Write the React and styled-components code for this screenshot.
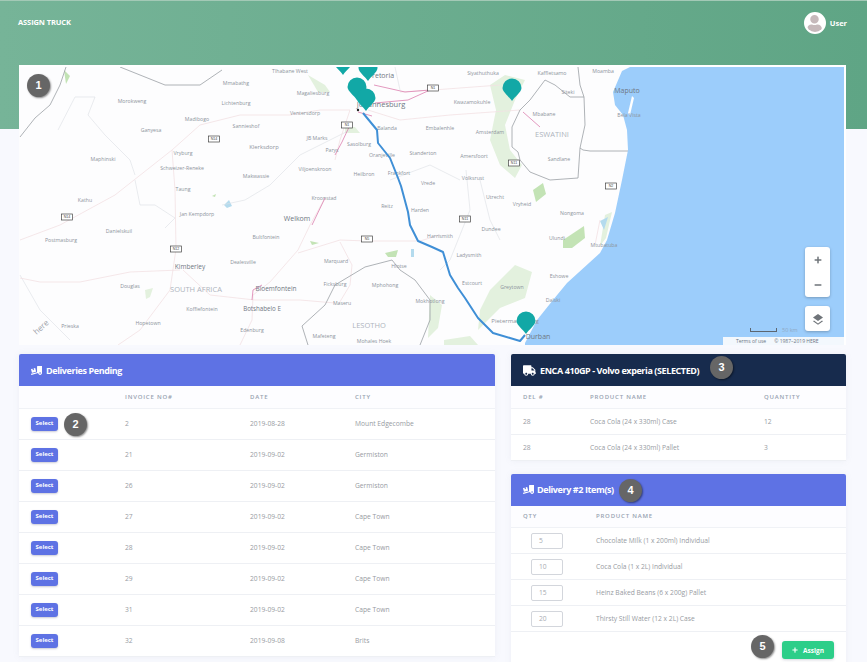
import React from 'react';
import styled, { createGlobalStyle } from 'styled-components';
import { FaTruck, FaTruckLoading, FaPlus, FaMinus, FaUser } from 'react-icons/fa';

const Global = createGlobalStyle`
  html, body { margin: 0; padding: 0; height: 662px; overflow: hidden; background: #f8f9fe; }
  body { font-family: "Open Sans", "Liberation Sans", sans-serif; }
  * { box-sizing: border-box; }
`;

const Page = styled.div`width: 867px; height: 662px; overflow: hidden; background: #f8f9fe;`;
const Hero = styled.header`
  height: 129px; padding: 11px 20px 0 18px; display: flex; justify-content: space-between; align-items: flex-start;
  background: linear-gradient(90deg, #76b498 0%, #5fa585 100%);
  border-top: 1px solid #a3c9b6;
`;
const HeroTitle = styled.h1`margin: 5px 0 0; font-size: 7.5px; line-height: 10px; font-weight: 700; color: #fff; text-transform: uppercase; letter-spacing: -0.1px;`;
const UserBox = styled.div`display: flex; align-items: center; gap: 4px; color: #fff; font-size: 7.5px; font-weight: 700;`;
const Avatar = styled.div`
  width: 22px; height: 22px; border-radius: 50%; background: #fff; display: flex; align-items: flex-end; justify-content: center; overflow: hidden;
  border: 2px solid #fff; color: #c6b9bb; font-size: 17px; line-height: 0;
`;
const Content = styled.main`margin-top: -64px; padding: 0 21px 0 19px; display: flex; flex-direction: column; gap: 9px;`;
const MapCard = styled.section`
  position: relative; height: 280px; background: #fff; border-top: 2px solid #fff; border-right: 2px solid #fff; overflow: hidden;
`;
const MapSvg = styled.svg`display: block; width: 825px; height: 278px;`;
const Lbl = styled.text`
  font-family: "Open Sans", "Liberation Sans", sans-serif;
  font-size: ${p => p.$s || 5.2}px; fill: ${p => p.$c || '#8d949d'}; text-anchor: middle;
`;
const Shield = styled.text`font-family: "Liberation Sans", sans-serif; font-size: 3.6px; fill: #444; text-anchor: middle;`;
const Soft = styled.g`filter: blur(0.7px);`;
const MapControls = styled.div`position: absolute; right: 14px; bottom: 14px; display: flex; flex-direction: column; gap: 9px;`;
const CtrlGroup = styled.div`
  width: 25px; border-radius: 3px; background: #fff; box-shadow: 0 1px 3px rgba(0,0,0,.25);
  display: flex; flex-direction: column; color: #6f7479;
`;
const CtrlBtn = styled.div`height: 25px; display: flex; align-items: center; justify-content: center; font-size: 8px;`;
const Attribution = styled.div`
  position: absolute; right: 0; bottom: 0; width: 121px; height: 8px; background: #f3f8fd; color: #6c7684;
  font-size: 5px; line-height: 8px; white-space: nowrap; padding-left: 13px; display: flex; gap: 8px;
`;
const ScaleBar = styled.div`
  position: absolute; left: 731px; top: 259px; display: flex; align-items: center; gap: 5px; color: #8fa9c4; font-size: 5.5px;
`;
const ScaleLine = styled.span`width: 27px; height: 4px; border: 1px solid #5c6670; border-top: none;`;
const Columns = styled.div`display: grid; grid-template-columns: 476px 335px; gap: 16px; align-items: start;`;
const Stack = styled.div`display: flex; flex-direction: column; gap: 13px;`;
const Card = styled.section`background: #fff; box-shadow: 0 0 6px rgba(136,152,170,.1); border-radius: 2px 2px 0 0;`;
const CardHead = styled.h2`
  position: relative; margin: 0; height: 32px; padding-left: ${p => p.$pad || 12}px; display: flex; align-items: center; gap: ${p => p.$gap || 4}px;
  background: ${p => p.$navy ? '#172b4d' : '#5e72e4'}; color: #fff; font-size: 9px; font-weight: 700; letter-spacing: -0.4px; border-radius: 2px 2px 0 0;
  svg { font-size: ${p => p.$icon || 11}px; }
`;
const Table = styled.table`width: 100%; border-collapse: collapse; table-layout: fixed;`;
const Th = styled.th`
  height: 22px; padding: 0 0 0 ${p => p.$pl || 0}px; width: ${p => p.$w ? p.$w + 'px' : 'auto'}; text-align: left;
  font-size: 6px; font-weight: 600; letter-spacing: 0.8px; text-transform: uppercase; color: #98a3b1;
  border-bottom: 1px solid #f0f2f6; background: #fdfdff;
`;
const Td = styled.td`
  position: relative; height: ${p => p.$h || 26}px; padding: 0 0 0 ${p => p.$pl || 0}px;
  font-size: 6.7px; color: #979ba2; border-bottom: 1px solid #eef0f4;
`;
const SelectBtn = styled.button`
  display: block; width: 27px; height: 14px; padding: 0 0 2px; border: 0; border-radius: 3px; background: #5e72e4; color: #fff;
  font: 700 6px "Open Sans", sans-serif; box-shadow: 0 1px 2px rgba(50,50,93,.25);
`;
const QtyBox = styled.div`
  margin-left: 8px; width: 32px; height: 16px; border: 1px solid #d3d6dc; border-radius: 2px; padding-left: 7px;
  font-size: 6.7px; line-height: 13px; color: #a8abb1; background: #fff;
`;
const Footer = styled.div`position: relative; height: 40px; display: flex; justify-content: flex-end; padding: 9px 12px 0 0;`;
const AssignBtn = styled.button`
  width: 52px; height: 18px; border: 0; border-radius: 3px; background: #2dce89; color: #fff; padding: 0;
  display: flex; align-items: center; justify-content: center; gap: 5px; font: 700 6.5px "Open Sans", sans-serif; box-shadow: 0 1px 3px rgba(50,50,93,.2);
  svg { font-size: 6px; }
`;
const Badge = styled.span`
  position: absolute; left: ${p => p.$x}px; top: ${p => p.$y}px; width: 23px; height: 23px; border-radius: 50%;
  background: #666; color: #fff; font: 700 11px/23px "Liberation Sans", sans-serif; text-align: center; letter-spacing: 0;
  box-shadow: 1px 1px 2px rgba(0,0,0,.45);
`;

const labels = [
  ['Tlhabane West',290,73],['Mmabathg',236,85],['Morokweng',132,103],['Lichtenburg',236,105],['Madibogo',197,121],['Ganyesa',151,132],['Sannieshof',246,128],['Maphinski',103,161],['Vryburg',183,155],['Schweizer-Reneke',182,170],['Klerksdorp',264,149,5.8],['JB Marks',317,140],['Ventersdorp',305,115],['Magaliesburg',313,95],['Makwassie',256,178],['Viljoenskroon',315,171],['Parys',332,152],['Sasolburg',359,146],['Heilbron',364,176],['Frankfort',399,175],['Oranjeville',382,157],['Standerton',423,155],['Embalenhle',440,130],['Balanda',387,130],['Siyathuthuka',483,75],['Kaffletsamo',552,75],['Moamba',603,73],['Kwazamokuhle',472,104],['Mbabane',544,116],['Amsterdam',490,134],['Amersfoort',474,158],['Sandlane',559,161],['Bela Vista',629,117],['Siteki',568,94],['Volksrust',473,180],['Taung',183,191],['Kathu',85,202],['Danielskuil',119,233],['Postmasburg',61,242],['Jan Kempdorp',197,216],['Kroonstad',324,200],['Bultfontein',266,239],['Dealesville',243,264],['Marquard',336,263],['Ficksburg',335,286],['Hlotse',399,268],['Mphohong',385,287],['Reitz',387,208],['Vrede',428,185],['Harden',420,212],['Harrismith',440,238],['Douglas',130,288],['Koffiefontein',202,311],['Hopetown',148,325],['Prieska',70,328],['Edenburg',252,332],['Mafeteng',324,338],['Mohales Hoek',374,343],['Mokhotlong',430,303],['Maseru',342,305],['Utrecht',495,199],['Vryheid',522,206],['Nongoma',572,215],['Dundee',491,231],['Ulundi',557,240],['Mtubatuba',604,247],['Ladysmith',469,257],['Estcourt',472,285],['Eshowe',559,278],['Greytown',512,289],['Dalski',553,302],['Pietermaritzburg',515,323,6],
  ['Pretoria',381,78,7,'#6f7782'],['Johannesburg',381,107,7.5,'#6f7782'],['Maputo',627,93,7,'#6f7782'],['Durban',538,339,7,'#6f7782'],['Welkom',297,221,7,'#6f7782'],['Kimberley',190,269,6.5,'#6f7782'],['Bloemfontein',276,291,6.5,'#6f7782'],['Botshabelo E',262,311,6.2,'#6f7782'],
  ['SOUTH AFRICA',196,292,7.5,'#aeb4bd'],['LESOTHO',369,328,7.5,'#aeb4bd'],['ESWATINI',552,137,7.5,'#aeb4bd'],
];
const shields = [['N1',433,88],['N1',347,125],['N14',214,139],['N14',67,217],['N12',176,249],['N5',367,239],['N11',514,163],['N2',611,186],['N11',465,219]];
const pins = [[343,62],[368,68],[357,87],[366,98],[512,88],[526,321]];
const greens = [
  'M490,85 L505,75 L525,80 L515,100 L505,125 L510,150 L522,165 L515,178 L500,165 L490,140 L496,110 Z',
  'M490,290 L515,265 L532,272 L525,298 L500,308 L478,330 L480,310 Z',
  'M605,215 L612,212 L606,238 L600,246 Z','M582,280 L596,265 L575,295 Z','M430,295 L442,305 L438,328 L428,338 Z',
  'M308,75 L325,85 L330,92 L318,92 Z','M345,127 L355,127 L360,133 L345,133 Z','M145,290 L153,288 L150,297 L146,299 Z','M444,340 L470,336 L478,345 L444,345 Z',
];
const deep = ['M533,190 L543,183 L546,194 L536,202 Z','M563,240 L584,226 L585,238 L572,248 L563,248 Z','M385,253 L398,250 L396,257 L388,257 Z','M310,241 L319,243 L312,245 Z','M212,196 L216,194 L215,197 Z','M64,70 L70,76 L66,84 Z'];
const dark = [
  'M66,67 L60,85 L50,105 L35,118 L20,137','M120,67 L140,75 L165,85 L200,85 L222,70',
  'M308,345 L302,326 L325,305 L335,285 L350,276 L365,267 L392,260 L400,270 L415,280 L430,300 L430,320 L420,345',
  'M520,110 L512,127 L512,147 L518,152 L520,160 L530,172 L550,180 L578,178 L580,148 L583,150 L590,151 L628,151',
  'M520,110 L530,100 L545,80 L555,85 L570,97 L584,97 L585,125 L580,148','M578,67 L580,85 L584,97',
];
const thin = [
  'M58,130 L75,97 L95,97 L88,115 L105,135 L130,160 L135,175','M135,180 L140,205 L155,205 L175,218 L165,228','M222,205 L245,200 L270,185 L300,155 L330,140 L350,130',
  'M395,67 L400,90 M480,180 L490,220 L500,240 M466,170 L470,210 L450,260 L440,270','M20,275 L40,310 L70,340','M390,180 L430,165 L460,180',
];
const pink = [
  'M20,240 L60,225 L115,195 L172,150 L200,125 L240,115 L290,115 L320,110 L350,110','M172,150 L175,190 L176,249 L170,290 L140,330 L118,345','M180,270 L130,272 L80,282 L40,282 L20,278',
  'M183,270 L210,295 L255,300 L300,300 L335,303','M325,198 L310,225 L298,250 L270,282 L253,295 L252,320 L240,345','M298,253 L340,240 L367,241 L420,241 L440,235','M340,242 L352,265 L350,285 L338,305',
  'M350,110 L340,140 L335,160','M368,110 L400,120 L450,115 L520,110','M400,92 L433,90 L500,85','M600,220 L595,245',
];
const pinkDark = ['M350,125 L342,142 L335,155','M358,112 L372,116 M374,85 L405,92 L430,90 L408,100 L375,103','M325,198 L312,225','M262,285 L253,290 L252,300','M523,112 L540,127','M540,325 L553,307'];
const route = 'M363,113 L377,130 L378,143 L390,158 L398,178 L401,186 L408,212 L410,225 L418,241 L432,247 L443,252 L450,275 L458,288 L465,298 L478,318 L493,333 L510,338 L520,341 L525,335';

function Pin({ x, y }) {
  return <path d={`M${x-9.5},${y} a9.5,9.5 0 1 1 19,0 c0,4 -7,9 -9.5,13 c-2.5,-4 -9.5,-9 -9.5,-13 z`} fill="#12a8a6" />;
}

function RoadMap() {
  return (
    <MapSvg viewBox="19 67 825 278">
      <rect x="19" y="67" width="825" height="278" fill="#fdfdfe" />
      <Soft>
        {greens.map(d => <path key={d} d={d} fill="#e3f1de" />)}
        {deep.map(d => <path key={d} d={d} fill="#c3e3b5" />)}
        <path d="M224,205 L229,200 L232,206 L227,208 Z M411,249 L414,249 L414,257 L411,257 Z M600,221 L608,217 L604,230 Z" fill="#b4dbee" />
      </Soft>
      {thin.map(d => <path key={d} d={d} fill="none" stroke="#dbdfe4" strokeWidth=".6" />)}
      {pink.map(d => <path key={d} d={d} fill="none" stroke="#f3e1e3" strokeWidth=".8" />)}
      {pinkDark.map(d => <path key={d} d={d} fill="none" stroke="#dc7fae" strokeWidth=".8" />)}
      {dark.map(d => <path key={d} d={d} fill="none" stroke="#9aa0a5" strokeWidth=".8" />)}
      <path d="M630,67 L622,71 L613,92 L615,105 L623,115 L627,130 L628,150 L622,180 L615,213 L607,240 L600,253 L567,283 L553,300 L537,320 L525,343 L525,345 L844,345 L844,67 Z" fill="#9ccdfb" />
      <path d="M632,96 L628,113 L630,115 L634,98 Z" fill="#fff" />
      {labels.map(([t, x, y, s, c]) => <Lbl key={t} x={x} y={y} $s={s} $c={c}>{t}</Lbl>)}
      <Lbl x={41} y={330} $s={8} $c="#9aa0a7" transform="rotate(-42 41 327)">here</Lbl>
      {shields.map(([t, x, y]) => (
        <g key={t + x}>
          <rect x={x - 5.5} y={y - 3} width="11" height="6" fill="#fff" stroke="#444" strokeWidth=".7" />
          <Shield x={x} y={y + 1.3}>{t}</Shield>
        </g>
      ))}
      <path d={route} fill="none" stroke="#3f8fd6" strokeWidth="2" strokeLinejoin="round" />
      {pins.map(([x, y]) => <Pin key={x} x={x} y={y} />)}
      <circle cx="358" cy="110" r="1.2" fill="#222" />
    </MapSvg>
  );
}

const pending = [
  ['2','2019-08-28','Mount Edgecombe'],['21','2019-09-02','Germiston'],['26','2019-09-02','Germiston'],['27','2019-09-02','Cape Town'],
  ['28','2019-09-02','Cape Town'],['29','2019-09-02','Cape Town'],['31','2019-09-02','Cape Town'],['32','2019-09-08','Brits'],
];
const loaded = [['28','Coca Cola (24 x 330ml) Case','12'],['28','Coca Cola (24 x 330ml) Pallet','3']];
const items = [['5','Chocolate Milk (1 x 200ml) Individual'],['10','Coca Cola (1 x 2L) Individual'],['15','Heinz Baked Beans (6 x 200g) Pallet'],['20','Thirsty Still Water (12 x 2L) Case']];

export default function App() {
  return (
    <Page>
      <Global />
      <Hero>
        <HeroTitle>Assign Truck</HeroTitle>
        <UserBox>
          <Avatar><FaUser /></Avatar>
          User
        </UserBox>
      </Hero>
      <Content>
        <MapCard>
          <RoadMap />
          <Badge $x={8} $y={7}>1</Badge>
          <ScaleBar><ScaleLine />50 km</ScaleBar>
          <MapControls>
            <CtrlGroup>
              <CtrlBtn><FaPlus /></CtrlBtn>
              <CtrlBtn><FaMinus /></CtrlBtn>
            </CtrlGroup>
            <CtrlGroup>
              <CtrlBtn>
                <svg width="12" height="12" viewBox="0 0 12 12" fill="#6f7479"><path d="M6 1 L11 4.5 L6 8 L1 4.5 Z" /><path d="M2 7.5 L6 10.5 L10 7.5 L11 8.3 L6 11.7 L1 8.3 Z" /></svg>
              </CtrlBtn>
            </CtrlGroup>
          </MapControls>
          <Attribution><span>Terms of use</span><span>© 1987–2019 HERE</span></Attribution>
        </MapCard>
        <Columns>
          <Card>
            <CardHead><FaTruckLoading />Deliveries Pending</CardHead>
            <Table>
              <thead>
                <tr>
                  <Th $w={106} />
                  <Th $w={125}>Invoice No#</Th>
                  <Th $w={105}>Date</Th>
                  <Th>City</Th>
                </tr>
              </thead>
              <tbody>
                {pending.map(([no, date, city], i) => (
                  <tr key={no}>
                    <Td $h={31} $pl={12}>
                      <SelectBtn>Select</SelectBtn>
                      {i === 0 && <Badge $x={45} $y={4}>2</Badge>}
                    </Td>
                    <Td $h={31}>{no}</Td>
                    <Td $h={31}>{date}</Td>
                    <Td $h={31}>{city}</Td>
                  </tr>
                ))}
              </tbody>
            </Table>
          </Card>
          <Stack>
            <Card>
              <CardHead $navy $icon={13} $gap={4}>
                <FaTruck />ENCA 410GP - Volvo experia (SELECTED)
                <Badge $x={199} $y={2}>3</Badge>
              </CardHead>
              <Table>
                <thead>
                  <tr>
                    <Th $w={79} $pl={12}>Del #</Th>
                    <Th $w={174}>Product Name</Th>
                    <Th>Quantity</Th>
                  </tr>
                </thead>
                <tbody>
                  {loaded.map(([d, name, q]) => (
                    <tr key={name}>
                      <Td $pl={12}>{d}</Td>
                      <Td>{name}</Td>
                      <Td>{q}</Td>
                    </tr>
                  ))}
                </tbody>
              </Table>
            </Card>
            <Card>
              <CardHead $gap={3}>
                <FaTruckLoading />Delivery #2 Item(s)
                <Badge $x={108} $y={5}>4</Badge>
              </CardHead>
              <Table>
                <thead>
                  <tr>
                    <Th $w={85} $pl={12}>Qty</Th>
                    <Th>Product Name</Th>
                  </tr>
                </thead>
                <tbody>
                  {items.map(([q, name]) => (
                    <tr key={name}>
                      <Td $pl={12}><QtyBox>{q}</QtyBox></Td>
                      <Td>{name}</Td>
                    </tr>
                  ))}
                </tbody>
              </Table>
              <Footer>
                <Badge $x={240} $y={3}>5</Badge>
                <AssignBtn><FaPlus />Assign</AssignBtn>
              </Footer>
            </Card>
          </Stack>
        </Columns>
      </Content>
    </Page>
  );
}
